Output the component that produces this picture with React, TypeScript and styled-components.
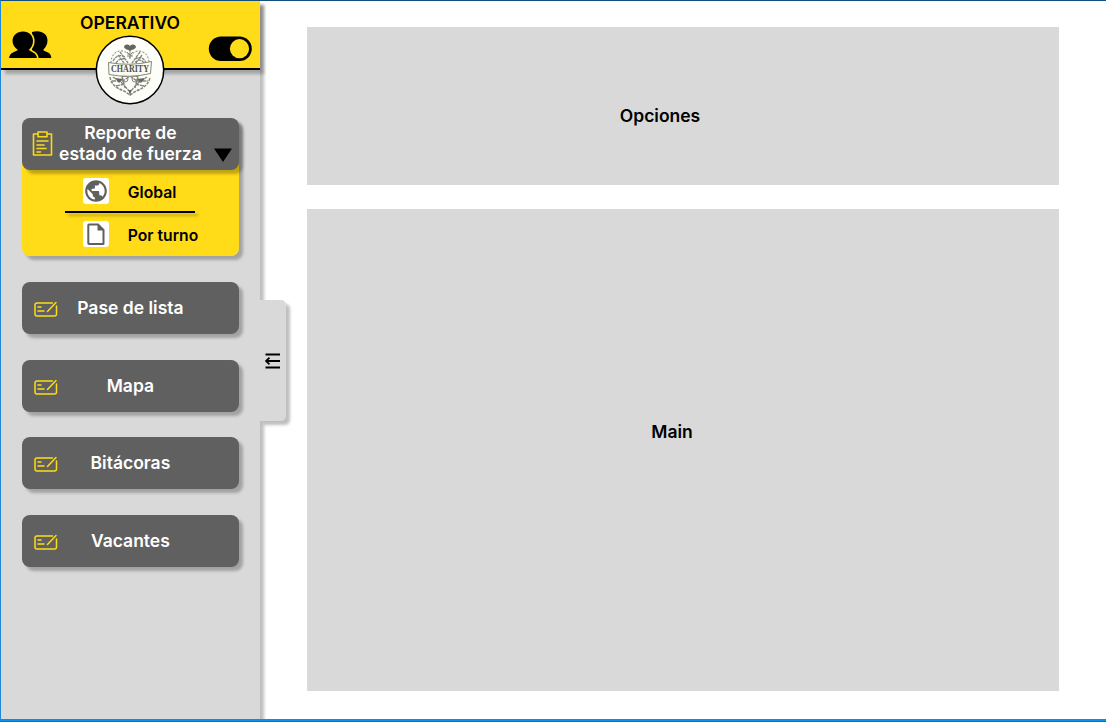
import React from "react";
import styled, { createGlobalStyle } from "styled-components";

const yellow = "#ffdc17";
const grey = "#d9d9d9";
const dark = "#606060";

const GlobalStyle = createGlobalStyle`
  * { box-sizing: border-box; }
  body { margin: 0; background: #fff; font-family: Inter, "Liberation Sans", sans-serif; }
  svg { display: block; flex: none; }
`;

const Frame = styled.div`
  display: flex;
  width: 1106px;
  height: 722px;
  overflow: hidden;
  border-top: 1px solid #14507f;
  border-left: 1px solid #1d87d8;
`;

const Window = styled.div`
  display: flex;
  flex-direction: column;
  height: 722px;
  overflow: hidden;
`;

const BottomEdge = styled.div`
  position: relative;
  z-index: 5;
  flex: none;
  height: 3px;
  background: linear-gradient(#1b86d6 0 1px, #0a92ee 1px 2px, #0872bd 2px 3px);
`;

const Sidebar = styled.aside`
  flex: none;
  width: 259px;
  background: ${grey};
  box-shadow: 4px 4px 3px rgba(0, 0, 0, 0.25);
`;

const Header = styled.header`
  position: relative;
  display: flex;
  justify-content: space-between;
  height: 69px;
  padding: 0 8px;
  background: ${yellow};
  border-bottom: 2px solid #000;
  box-shadow: 4px 4px 3px rgba(0, 0, 0, 0.25);
`;

const HeaderIcon = styled.div<{ $top: number }>`
  padding-top: ${(p) => p.$top}px;
`;

const Title = styled.h1`
  margin: 12px 0 0;
  font-size: 17.5px;
  line-height: 20px;
  font-weight: 600;
`;

const Avatar = styled.div`
  position: absolute;
  left: 94px;
  top: 34px;
`;

const Menu = styled.nav`
  display: flex;
  flex-direction: column;
  gap: 25.8px;
  padding: 47.7px 21.5px 0 21.3px;
`;

const Group = styled.div`
  height: 138.3px;
  border-radius: 8px;
  background: linear-gradient(transparent 20px, ${yellow} 20px);
  box-shadow: 4px 4px 3px rgba(0, 0, 0, 0.25);
`;

const Button = styled.div<{ $tall?: boolean }>`
  display: grid;
  grid-template-columns: 36px 1fr 36px;
  align-items: center;
  height: 52px;
  border-radius: 8px;
  background: ${dark};
  color: #fff;
  font-size: 17.5px;
  font-weight: 600;
  line-height: ${(p) => (p.$tall ? 21 : 20)}px;
  text-align: center;
  white-space: nowrap;
  box-shadow: 4px 4px 3px rgba(0, 0, 0, 0.25);
`;

const ButtonLabel = styled.span<{ $lift?: number }>`
  padding-bottom: ${(p) => p.$lift ?? 0}px;
`;

const IconSlot = styled.span<{ $left: number; $top?: number }>`
  padding-left: ${(p) => p.$left}px;
  padding-top: ${(p) => p.$top ?? 0}px;
`;

const SubItem = styled.div`
  display: flex;
  align-items: center;
  gap: 19px;
  height: 26px;
  margin-left: 60.5px;
  font-size: 15.7px;
  font-weight: 600;
`;

const SubLabel = styled.span`
  padding-top: 4px;
`;

const SubMenu = styled.div`
  padding-top: 8.3px;
`;

const Tile = styled.span`
  display: grid;
  place-items: center;
  width: 26px;
  height: 26px;
  border-radius: 3px;
  background: #fff;
`;

const Divider = styled.div`
  width: 130px;
  height: 2px;
  margin: 7px auto 8px 43px;
  background: #000;
  box-shadow: 3px 3px 3px rgba(0, 0, 0, 0.25);
`;

const CollapseTab = styled.div`
  position: relative;
  display: grid;
  place-items: center;
  flex: none;
  width: 26px;
  height: 121px;
  margin-top: 299px;
  padding: 1px 2px 0 0;
  border-radius: 0 5px 5px 0;
  background: ${grey};
  box-shadow: 4px 4px 3px rgba(0, 0, 0, 0.25);
  clip-path: inset(0 -12px -12px 0);
`;

const Content = styled.main`
  display: flex;
  flex-direction: column;
  gap: 23.5px;
  flex: 1;
  padding: 26px 47px 0 21px;
`;

const Panel = styled.section<{ $height: number; $labelTop: number; $shift: number }>`
  height: ${(p) => p.$height}px;
  padding-top: ${(p) => p.$labelTop}px;
  padding-right: ${(p) => p.$shift}px;
  background: ${grey};
  text-align: center;
  font-size: 17.5px;
  line-height: 20px;
  font-weight: 600;
`;

const People = () => (
  <svg width="43" height="28" viewBox="0 0 43 28">
    <path d="M23 1c8-2.500 15.500 1 15.500 8.500 0 4-2 7-4 9v1l4.500 2c2 1 3 2.500 3.300 5.500H27l-4-8Z" />
    <path d="M14 .5c6 0 10 4 10 9.500 0 4-2 7-4.200 9l4.200 2.500c2 1 3.500 2.500 4 5.500H0c.5-3 2-4.500 4-5.500l5-2.500c-3-2-5.500-5-5.500-9C3.500 4.500 8 .5 14 .5Z" stroke={yellow} strokeWidth="3.200" paintOrder="stroke" />
  </svg>
);

const Toggle = () => (
  <svg width="44" height="26" viewBox="0 0 44 26">
    <rect x=".8" y=".5" width="43" height="24.500" rx="12.250" />
    <circle cx="31.500" cy="12.700" r="9.600" fill={yellow} />
  </svg>
);

const Crest = () => (
  <svg width="70" height="70" viewBox="0 0 70 70">
    <circle cx="35" cy="35" r="33.700" fill="#fdfef8" stroke="#000" strokeWidth="1.500" />
    <g fill="none" stroke="#85867a" strokeWidth="1">
      <path d="M16 28c0-8 5-13 12-12 4 1 6 4 7 7 1-3 4-7 8-7 7 0 11 5 11 12" strokeDasharray="2 1.500" />
      <path d="M18 26c3-5 7-7 12-4M21 28c2-3 5-5 9-4M40 24c5-3 9-1 11 4M40 27c4-3 7-2 9 1M25 17l8 11M45 17l-8 11M23 20l6 8M47 20l-6 8" strokeWidth="1.300" strokeDasharray="3 .7" />
      <path d="M15 42c1 7 6 11 14 14l6 4 6-4c8-3 13-7 14-14" strokeDasharray="3 1" strokeWidth="1.500" />
      <path d="M18 42l9 6 8 9 8-9 9-6M17 46l11 0 7-5 7 5 11 0M21 51l9-2M49 51l-9-2M27 41l3 12M43 41l-3 12" strokeWidth="1.400" strokeDasharray="4 .8" />
      <path d="M35 14v10M32 17l3 3 3-3M32 21h6" />
      <circle cx="30" cy="44" r="3" />
      <circle cx="40" cy="44" r="3" />
    </g>
    <path d="M29 12c1-3 4-3 6-1 2-2 5-2 6 1-1 3-4 2-6 4-2-2-5-1-6-4Z" fill="#66675c" />
    <path d="M20 43l8 1-4 4ZM50 43l-8 1 4 4ZM33.500 55l1.500 6 1.500-6Z" fill="#66675c" />
    <path d="M13.500 27.500q21.500 4 43-1l-1 12q-21 5-41.500 1Z" fill="#fafbf2" stroke="#77786b" strokeWidth=".9" />
    <text x="35" y="37" textAnchor="middle" textLength="38" lengthAdjust="spacingAndGlyphs" fontFamily="Liberation Serif, serif" fontWeight="700" fontSize="10" fill="#505147">CHARITY</text>
  </svg>
);

const Clipboard = () => (
  <svg width="21" height="26" viewBox="0 0 21 26" fill="none" stroke="#fad91a" strokeWidth="1.600" strokeLinejoin="round" strokeLinecap="round">
    <path d="M6 3H1.500v21h18V3H15M6 1h9v4.800H6ZM5 10h11M5 14h7M5 17.500h9M5 21h3.500" />
  </svg>
);

const Card = () => (
  <svg width="24" height="17" viewBox="0 0 24 17" fill="none" stroke="#fddb18" strokeWidth="1.500" strokeLinecap="round" strokeLinejoin="round">
    <path d="M18.500 2H3Q1 2 1 4v9q0 2 2 2h17.500q2 0 2-2V5M4 6h3M4 10h6M13.500 10.500L22 1.500" />
  </svg>
);

const Globe = () => (
  <svg width="26" height="26" viewBox="0 0 24 24" fill={dark}>
    <path d="M12 2C6.480 2 2 6.480 2 12s4.480 10 10 10 10-4.480 10-10S17.520 2 12 2Zm-1 17.930C7.050 19.440 4 16.080 4 12c0-.62.08-1.210.21-1.790L9 15v1c0 1.100.9 2 2 2v1.930Zm6.900-2.540c-.26-.81-1-1.390-1.900-1.390h-1v-3c0-.55-.45-1-1-1H8v-2h2c.55 0 1-.45 1-1V7h2c1.100 0 2-.9 2-2v-.41c2.930 1.190 5 4.060 5 7.410 0 2.080-.8 3.970-2.100 5.390Z" />
  </svg>
);

const Page = () => (
  <svg width="26" height="26" viewBox="0 0 26 26" fill={dark}>
    <path fillRule="evenodd" d="M6 2.500H15.500L21.500 8.500V22.500Q21.500 24 20 24H6Q4.300 24 4.300 22.200V4.300Q4.300 2.500 6 2.500ZM6.300 4.500V22H19.500V9.500H14.500V4.500Z" />
  </svg>
);

const CollapseIcon = () => (
  <svg width="15" height="16" viewBox="0 0 15 16" fill="none" stroke="#000" strokeWidth="1.800">
    <path d="M.5 1.500H15M1 8H15M.5 14.500H15M4.500 4.700L1 8l3.500 3.300" />
  </svg>
);

const entries = ["Pase de lista", "Mapa", "Bitácoras", "Vacantes"];

export default function App() {
  return (
    <Window>
      <GlobalStyle />
      <Frame>
        <Sidebar>
          <Header>
            <HeaderIcon $top={30}><People /></HeaderIcon>
            <Title>OPERATIVO</Title>
            <HeaderIcon $top={35}><Toggle /></HeaderIcon>
            <Avatar><Crest /></Avatar>
          </Header>
          <Menu>
            <Group>
              <Button $tall>
                <IconSlot $left={9.5}><Clipboard /></IconSlot>
                <ButtonLabel $lift={1}>Reporte de<br />estado de fuerza</ButtonLabel>
                <IconSlot $left={11.5} $top={22}>
                  <svg width="18" height="14" viewBox="0 0 18 14"><path d="M0 .5h18L9 14Z" /></svg>
                </IconSlot>
              </Button>
              <SubMenu>
                <SubItem><Tile><Globe /></Tile><SubLabel>Global</SubLabel></SubItem>
                <Divider />
                <SubItem><Tile><Page /></Tile><SubLabel>Por turno</SubLabel></SubItem>
              </SubMenu>
            </Group>
            {entries.map((label) => (
              <Button key={label}>
                <IconSlot $left={12} $top={3}><Card /></IconSlot>
                <ButtonLabel>{label}</ButtonLabel>
              </Button>
            ))}
          </Menu>
        </Sidebar>
        <CollapseTab><CollapseIcon /></CollapseTab>
        <Content>
          <Panel $height={158} $labelTop={79} $shift={46}>Opciones</Panel>
          <Panel $height={482} $labelTop={213} $shift={22}>Main</Panel>
        </Content>
      </Frame>
      <BottomEdge />
    </Window>
  );
}
